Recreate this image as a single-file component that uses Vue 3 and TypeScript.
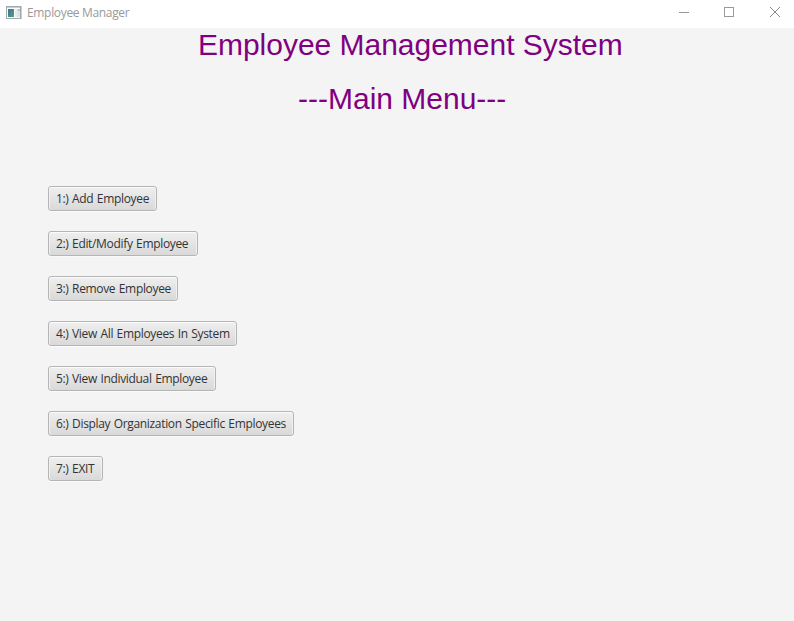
<script setup lang="ts">
interface MenuItem {
  id: string
  label: string
  width: number
}

const items: MenuItem[] = [
  { id: 'add', label: '1:) Add Employee', width: 109 },
  { id: 'edit', label: '2:) Edit/Modify Employee', width: 150 },
  { id: 'remove', label: '3:) Remove Employee', width: 130 },
  { id: 'all', label: '4:) View All Employees In System', width: 189 },
  { id: 'one', label: '5:) View Individual Employee', width: 168 },
  { id: 'org', label: '6:) Display Organization Specific Employees', width: 246 },
  { id: 'exit', label: '7:) EXIT', width: 55 },
]
</script>

<template>
  <div class="window">
    <header class="titlebar">
      <svg class="app-icon" width="16" height="14" viewBox="0 0 16 14" shape-rendering="crispEdges">
        <defs>
          <linearGradient id="pane" x1="0" y1="0" x2="1" y2="1">
            <stop offset="0" stop-color="#3f6fa0" />
            <stop offset="1" stop-color="#4fa377" />
          </linearGradient>
        </defs>
        <rect x="0.5" y="0.5" width="14" height="12" fill="#fbfbfb" stroke="#a3a8ad" />
        <rect x="1" y="1" width="13" height="1" fill="#c3cdd3" />
        <rect x="15" y="0" width="1" height="13" fill="#c9cdd0" />
        <rect x="2" y="3" width="6" height="8" fill="url(#pane)" />
        <rect x="9" y="3" width="2" height="8" fill="#e8ecee" />
        <rect x="11" y="3" width="3" height="8" fill="#dce5e4" />
        <rect x="12" y="3" width="2" height="2" fill="#a9ccb5" />
      </svg>
      <span class="caption">Employee Manager</span>
      <svg class="controls" width="120" height="28" viewBox="0 0 120 28" fill="none" stroke="#999">
        <path d="M5 12.5h10" />
        <rect x="50.5" y="7.5" width="9" height="9" />
        <path d="M96 7l10 10M106 7l-10 10" stroke="#888" />
      </svg>
    </header>
    <main class="content">
      <h1 class="heading">Employee Management System</h1>
      <h2 class="subheading">---Main Menu---</h2>
      <nav class="menu">
        <button v-for="item in items" :key="item.id" class="menu-button" :style="{ width: item.width + 'px' }">{{ item.label }}</button>
      </nav>
    </main>
  </div>
</template>

<style>
body { margin: 0; }
</style>

<style scoped>
.window { width: 794px; height: 621px; background: #f4f4f4; overflow: hidden; }
.titlebar { height: 28px; background: #fff; display: flex; align-items: center; box-sizing: border-box; padding-left: 6px; }
.app-icon { margin-top: -3px; }
.caption { margin: -3px auto 0 5px; font: 12px/16px "Open Sans", sans-serif; letter-spacing: -0.33px; color: #999; }
.controls { flex: none; }
.content { font-family: "Liberation Sans", Arial, sans-serif; color: #800080; }
h1, h2 { margin: 0; font-size: 30px; line-height: 34px; font-weight: 400; white-space: nowrap; }
.heading { padding-left: 198px; letter-spacing: -0.02px; }
.subheading { padding: 20px 0 0 298px; }
.menu { display: flex; flex-direction: column; align-items: flex-start; gap: 20px; padding: 70px 0 0 48px; }
.menu-button { height: 25px; box-sizing: border-box; padding: 0 0 0 7px; border: 1px solid #b5b5b5; border-radius: 3px; background: linear-gradient(#efefef, #d9d9d9); box-shadow: inset 0 1px #fbfbfb, inset 1px 0 #f0f0f0, inset -1px 0 #f0f0f0, 0 1px #fafafa; color: #333; font: 12px/23px "Open Sans", sans-serif; letter-spacing: -0.33px; word-spacing: 0.7px; text-align: left; white-space: nowrap; }
</style>
